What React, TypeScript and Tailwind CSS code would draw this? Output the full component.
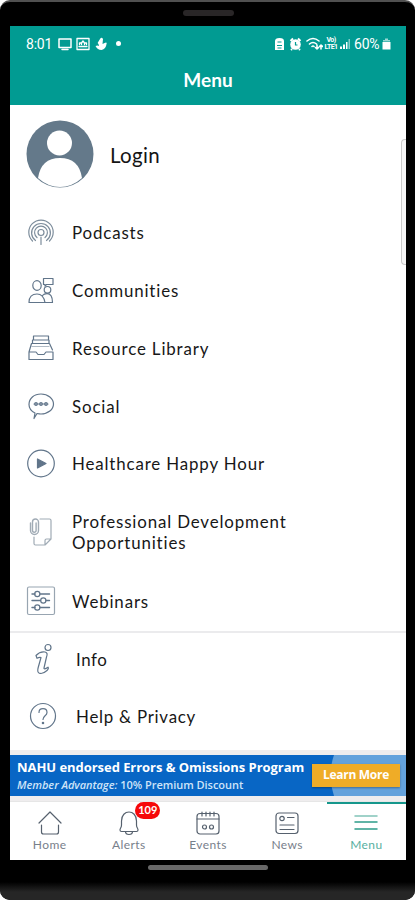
import React from "react";

const Line = ({ children, className = "", w = 30, h = 30, sw = 1.2 }: { children: React.ReactNode; className?: string; w?: number; h?: number; sw?: number }) => (
  <svg width={w} height={h} viewBox={`0 0 ${w} ${h}`} fill="none" stroke="currentColor" strokeWidth={sw} strokeLinecap="round" strokeLinejoin="round" className={`shrink-0 ${className}`}>
    {children}
  </svg>
);

const PodcastIcon = () => (
  <Line className="text-[#7d8d9c]">
    <circle cx="15" cy="14.500" r="3" />
    <path d="M15 19V26.500M11 19.500a6.400 6.400 0 1 1 8 0M9.500 22.500a9.400 9.400 0 1 1 11 0M6.500 23a12.200 12.200 0 1 1 17 0" />
  </Line>
);
const CommunityIcon = () => (
  <Line>
    <ellipse cx="11" cy="9.500" rx="4.200" ry="4.800" />
    <path d="M3 26.500c0-5.500 3-8.500 8-8.500s7 3 8 8.500zM16.500 19.500c1-1.300 2.500-1.900 4.500-1.900 3.500 0 5.500 3 5.500 8.900H19M17.500 2.500h9.500v6h-6.500l-1.500 1.500V8.500h-1.500z" />
    <circle cx="21.500" cy="13.800" r="3.300" />
  </Line>
);
const LibraryIcon = () => (
  <Line>
    <path d="M3 18h7l2 2.500h6l2-2.500h7v7.500H3zM3 18l2.500-8.500h18L26.500 16M6.500 9V6h16.500v3.500M7.500 5.500V2h15v3.500" />
    <path d="M6 12.500h17" opacity=".5" />
  </Line>
);
const SocialIcon = () => (
  <Line>
    <path d="M9 22C5 20 3 17.500 3 13.500 3 7.500 8 3 15 3s12.500 4.500 12.500 10S22 23 15 23c-1.500 0-2.500-.2-4-.5L8 27.500z" />
    <circle cx="10" cy="13" r="1.300" /><circle cx="15" cy="13" r="1.300" /><circle cx="20" cy="13" r="1.300" />
    <path d="M8 13h14" />
  </Line>
);
const PlayIcon = () => (
  <Line>
    <circle cx="15" cy="14.500" r="13.300" />
    <path d="M11.500 10v9l8.500-4.500z" fill="currentColor" />
  </Line>
);
const PaperIcon = () => (
  <Line className="text-[#a0abb5]">
    <path d="M14 2h9.500q1.500 0 1.500 1.500V22l-6 6H9.500Q8 28 8 26.500V20M25 22h-4.500q-1.500 0-1.500 1.500V28" />
    <path d="M4.500 6v7.500a4 4 0 0 0 8 0V5a3 3 0 0 0-6 0v8.500a1.800 1.800 0 0 0 3.600 0V6" strokeWidth="1.400" />
  </Line>
);
const WebinarIcon = () => (
  <Line>
    <rect x="1.500" y="1" width="27" height="27.500" rx="1.500" className="text-[#98a5b1]" stroke="currentColor" />
    <path d="M6 8h3M14 8h9.500M6 14.500h8.500M20 14.500h3.500M6 21.500h3M14 21.500h9.500" strokeWidth="1.400" />
    <circle cx="11.300" cy="8" r="2.600" /><circle cx="17.300" cy="14.500" r="2.600" /><circle cx="11.300" cy="21.500" r="2.600" />
  </Line>
);
const InfoIcon = () => (
  <Line h={36}>
    <circle cx="20" cy="5.500" r="3" />
    <path d="M8 13.500c3-3.200 6-4 9-3.500 2.500.5 2.500 2.500 1.500 5L16 26c-.2 1.200 1 1.200 4-.8.800 1.200.500 2-1 3.300-3 2.700-6 3.500-8 2.500-1.800-1-1.500-3-.800-5.500L13 15.500c-1.500-.5-3 .2-4 .8z" />
  </Line>
);
const HelpIcon = () => (
  <Line>
    <circle cx="15" cy="15" r="12.500" />
    <path d="M11 11.500c0-2.500 1.800-3.800 4-3.800s4 1.500 4 3.700c0 3.300-4 3.500-4 7.100" />
    <circle cx="15" cy="22" r=".7" />
  </Line>
);

const Row = ({ icon, h, children, gap = "gap-4", tracking = "tracking-[0.850px]" }: { icon: React.ReactNode; h: string; children: React.ReactNode; gap?: string; tracking?: string }) => (
  <li className={`flex items-center pl-4 ${gap} ${h}`}>
    {icon}
    <span className={`whitespace-nowrap text-[16.900px] leading-[21px] text-[#171717] ${tracking}`}>{children}</span>
  </li>
);

const Tab = ({ icon, label, active = false }: { icon: React.ReactNode; label: string; active?: boolean }) => (
  <div className={`relative flex flex-1 flex-col items-center border-t-2 pt-[5px] ${active ? "border-[#16978c] text-[#2d9c89]" : "border-transparent text-[#56616e]"}`}>
    {icon}
    <span className="text-[12px] leading-4 tracking-[0.400px] opacity-80">{label}</span>
  </div>
);

const StatusBar = () => (
  <div className="flex h-[35px] items-center justify-between pl-4 pr-[15px] text-white">
    <div className="flex items-center gap-[4px] font-[Roboto]">
      <span className="mr-px w-[27px] text-[14px] leading-none tracking-[-0.200px]">8:01</span>
      <Line w={14} h={14} sw={1.500}><path d="M1 2h12v8.500H1zM4 12.500h6" /></Line>
      <Line w={14} h={14} sw={1.300}><path d="M1 1.500h12v11H1zM3 9.500h8M3.500 7.500V6h2v1.500M8.500 7.500V6h2v1.500M5.500 6l1.500-2 1.500 2" /></Line>
      <svg className="ml-px" width="13" height="14" viewBox="0 0 13 14" fill="currentColor"><path d="M5 2q1.500-2.500 3 0L7.500 7q5-3 4 0-.5 5-5 6-4 0-6-4 2-1 3.500 0L3.500 7q-1.500-1 0-2.500z" /></svg>
      <span className="ml-[4px] size-[5px] rounded-full bg-white" />
    </div>
    <div className="flex items-center font-[Roboto]">
      <svg width="11" height="14" viewBox="0 0 11 14"><path d="M1 4q0-3 4.500-3T10 4v9H1z" fill="white" /><path d="M3.500 5h4M3 8.500h5M3.500 11h4" stroke="#019b92" /></svg>
      <svg className="ml-[4px]" width="13" height="14" viewBox="0 0 13 14"><path d="M1.500 4 4 1.500M9 1.500 11.500 4M3 12l-1 1M10 12l1 1" stroke="white" strokeWidth="2" /><circle cx="6.500" cy="7.500" r="5.300" fill="white" /><path d="M6.500 5v3h2" stroke="#019b92" strokeWidth="1.200" fill="none" /></svg>
      <Line className="ml-[4px]" w={17} h={14} sw={1.600}><path d="M1 4q6-5 12 0M3.500 7q3.500-3 7 0M6 9.500q1-1 2 0M11 8v4M9.500 10.500 11 12l1.500-1.500M15 12V8M13.500 9.500 15 8l1.500 1.500" /></Line>
      <span className="flex w-[16px] flex-col items-center text-[7px] font-bold leading-none tracking-[-0.600px]"><span className="h-[7px]">Vo)</span><span className="h-[7px]">LTE1</span></span>
      <svg width="12" height="12" viewBox="0 0 12 12" fill="white"><path d="M1 8.500h2v2.500H1zM4 6.500h2V11H4zM7 4h1.500v7H7z" /><path d="M9.500 1h1.500v10H9.500z" opacity=".5" /></svg>
      <span className="ml-[3px] w-[28px] text-[14px] leading-none tracking-[-0.200px]">60%</span>
      <svg width="9" height="13" viewBox="0 0 9 13" fill="white"><path d="M3 1.500h3v1.500h2v1.500H1V3h2z" opacity=".6" /><path d="M.5 5h8v7.500h-8z" /></svg>
    </div>
  </div>
);

export default function App() {
  return (
    <div className="h-[900px] w-[415px] overflow-hidden bg-white font-['Lato','Noto_Sans',sans-serif]">
      <div className="relative flex h-full flex-col rounded-[10px] border-t-2 border-[#505050] bg-black pl-[10px] pr-[9px]">
        <div className="flex h-[24px] items-start justify-center pt-[8px]">
          <div className="h-[6px] w-[51px] rounded-full bg-[#292627]" />
        </div>
        <main className="relative flex h-[834px] flex-col overflow-hidden bg-white">
          <header className="h-[78.500px] shrink-0 bg-[#019b92]">
            <StatusBar />
            <h1 className="pt-[8px] text-center text-[19px] font-bold leading-[22px] tracking-[0.100px] text-white">Menu</h1>
          </header>
          <div className="flex h-[99px] shrink-0 items-center pl-[16px]">
            <svg width="68" height="68" viewBox="0 0 68 68">
              <circle cx="34" cy="34" r="33.500" fill="#64798a" />
              <circle cx="33.500" cy="23" r="12.500" fill="white" />
              <path d="M12 58Q15 38 34 38T56 58Q46 67 34 67T12 58" fill="white" />
            </svg>
            <span className="ml-4 pt-px text-[20.500px] leading-6 tracking-[0.300px] text-[#141414]">Login</span>
          </div>
          <ul className="shrink-0 text-[#61758a]">
            <Row h="h-[58px]" icon={<PodcastIcon />}>Podcasts</Row>
            <Row h="h-[58px]" icon={<CommunityIcon />}>Communities</Row>
            <Row h="h-[58px]" icon={<LibraryIcon />}>Resource Library</Row>
            <Row h="h-[57px]" icon={<SocialIcon />}>Social</Row>
            <Row h="h-[58px]" icon={<PlayIcon />}>Healthcare Happy Hour</Row>
            <Row h="h-[79px]" icon={<PaperIcon />}>Professional Development<br />Opportunities</Row>
            <Row h="h-[59px]" icon={<WebinarIcon />}>Webinars</Row>
          </ul>
          <ul className="h-[119px] shrink-0 border-t-2 border-[#ebebed] pl-[2px] text-[#61758a]">
            <Row h="h-[54px]" gap="gap-[18px]" tracking="tracking-[0.600px]" icon={<InfoIcon />}>Info</Row>
            <Row h="h-[59px]" gap="gap-[18px]" tracking="tracking-[0.750px]" icon={<HelpIcon />}>Help &amp; Privacy</Row>
          </ul>
          <section className="relative flex h-[51px] shrink-0 items-center border-y-[5px] border-[#efedee] bg-[#0866c5] pl-[7px] pr-[6px] font-['Open_Sans']">
            <svg className="absolute right-0 top-0" width="76" height="41" viewBox="0 0 76 41"><path d="M4 0H76V41H4Q-3 20 4 0" fill="#64a2dc" /></svg>
            <div className="flex-1 whitespace-nowrap pt-px text-white">
              <p className="text-[13px] font-bold leading-[17px] tracking-[-0.050px]">NAHU endorsed Errors &amp; Omissions Program</p>
              <p className="text-[11px] font-semibold leading-[17px] tracking-[-0.030px] text-[#cfe4f8]"><i>Member Advantage:</i> 10% Premium Discount</p>
            </div>
            <button className="relative h-[23px] w-[88px] shrink-0 whitespace-nowrap bg-[#efac27] text-[12px] font-bold tracking-[-0.300px] text-white shadow-[0_1px_2px_#0005]">Learn More</button>
          </section>
          <nav className="flex flex-1 border-t border-[#e6e6e6]">
            <Tab label="Home" icon={<Line w={28} h={28}><path d="M3 14 14 3l11 11M5.500 16v7q0 2 2 2h13q2 0 2-2v-7" /></Line>} />
            <Tab label="Alerts" icon={<><Line w={28} h={28}><path d="M5 21c0-2 1.500-2 1.500-5v-4c0-12 15-12 15 0v4c0 3 1.500 3 1.500 5q0 1.500-1.500 1.500h-15Q5 22.500 5 21zM10.500 22.500q0 3 3.500 3t3.500-3" /></Line><span className="absolute left-[46px] top-[-2px] flex h-[17px] w-[25px] items-center justify-center rounded-full bg-[#f60909] text-[11px] font-bold text-white">109</span></>} />
            <Tab label="Events" icon={<Line w={28} h={28}><rect x="3" y="4.500" width="22" height="20.500" rx="3" /><path d="M3 10h22M8 3v4M12 3v4M16 3v4M20 3v4" /><circle cx="10.500" cy="18" r="2" /><circle cx="17.500" cy="18" r="2" /></Line>} />
            <Tab label="News" icon={<Line w={28} h={28}><rect x="3" y="4" width="22" height="20.500" rx="3" /><circle cx="9" cy="9.500" r="2.200" /><path d="M14.500 8.500H21M7 16h14M7 20.500h14" /></Line>} />
            <Tab active label="Menu" icon={<Line w={28} h={28} sw={1.500}><path d="M3 7h22" opacity=".6" /><path d="M3 13h22M3 20h22" /></Line>} />
          </nav>
          <div className="absolute right-0 top-[113px] h-[126px] w-[5px] rounded-l-[4px] border border-r-0 border-[#c9c9c9] bg-[#f6f6f6]" />
        </main>
        <div className="-ml-[10px] -mr-[9px] flex flex-1 justify-center rounded-b-[10px] bg-[linear-gradient(to_bottom,black_55%,#262626_80%)] pt-[5px]">
          <div className="h-[5px] w-[120px] rounded-full bg-[#686868]" />
        </div>
      </div>
    </div>
  );
}
